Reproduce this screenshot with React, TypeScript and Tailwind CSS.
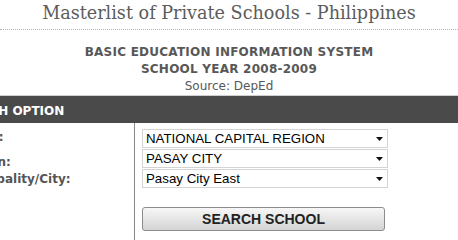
import React from "react";

function Select({ value }: { value: string }) {
  return (
    <div className="flex h-[19px] w-[246px] items-center justify-between border border-[#d4d4d4] bg-white pl-[3px] pr-[4px]">
      <span className="text-[13.3px] leading-none text-black" style={{ fontFamily: '"Liberation Sans", Arial, sans-serif' }}>
        {value}
      </span>
      <svg width="7" height="4" viewBox="0 0 7 4">
        <path d="M0 0H7L3.5 4Z" fill="#111" />
      </svg>
    </div>
  );
}

export default function App() {
  return (
    <div className="relative h-[240px] w-[458px] overflow-hidden bg-white" style={{ fontFamily: '"DejaVu Sans", Verdana, sans-serif' }}>
      <div className="flex h-[30px] items-start justify-center border-b border-dotted border-[#b5b5b5]">
        <h1 className="mt-[1px] text-[17.6px] leading-[24px] text-[#5c5c5c]" style={{ fontFamily: '"DejaVu Serif", Georgia, serif' }}>
          Masterlist of Private Schools - Philippines
        </h1>
      </div>
      <div className="flex flex-col items-center pt-[14px] text-[12px] leading-[17px] text-[#585858]">
        <div className="font-bold tracking-[0.24px]">BASIC EDUCATION INFORMATION SYSTEM</div>
        <div className="font-bold tracking-[0.24px]">SCHOOL YEAR 2008-2009</div>
        <div>Source: DepEd</div>
      </div>
      <div className="border-t border-[#cfcfcf]">
        <div className="flex h-[27px] items-center bg-[#4a4a4a] pt-[2px]">
          <span className="-ml-[46px] text-[12px] font-bold text-white">SEARCH OPTION</span>
        </div>
        <div className="flex">
          <div className="w-[135px] shrink-0 border-r border-[#8a8a8a] text-[12px] font-bold text-[#555]">
            <div className="-ml-[48px] pt-[6px] leading-[17px]">
              <div className="h-[25px]">Region:</div>
              <div className="h-[17px]">Division:</div>
              <div>Municipality/City:</div>
            </div>
          </div>
          <div className="h-[120px] flex-1 pl-[7px] pt-[6px]">
            <div className="flex flex-col gap-[1px]">
              <Select value="NATIONAL CAPITAL REGION" />
              <Select value="PASAY CITY" />
              <Select value="Pasay City East" />
            </div>
            <button
              className="mt-[19px] h-[24px] w-[243px] rounded-[3px] border border-[#8c8c8c] bg-gradient-to-b from-[#f7f7f7] to-[#d4d4d4] text-[14px] font-bold text-[#222]"
              style={{ fontFamily: '"Liberation Sans", Arial, sans-serif' }}
            >
              SEARCH SCHOOL
            </button>
          </div>
        </div>
      </div>
    </div>
  );
}
